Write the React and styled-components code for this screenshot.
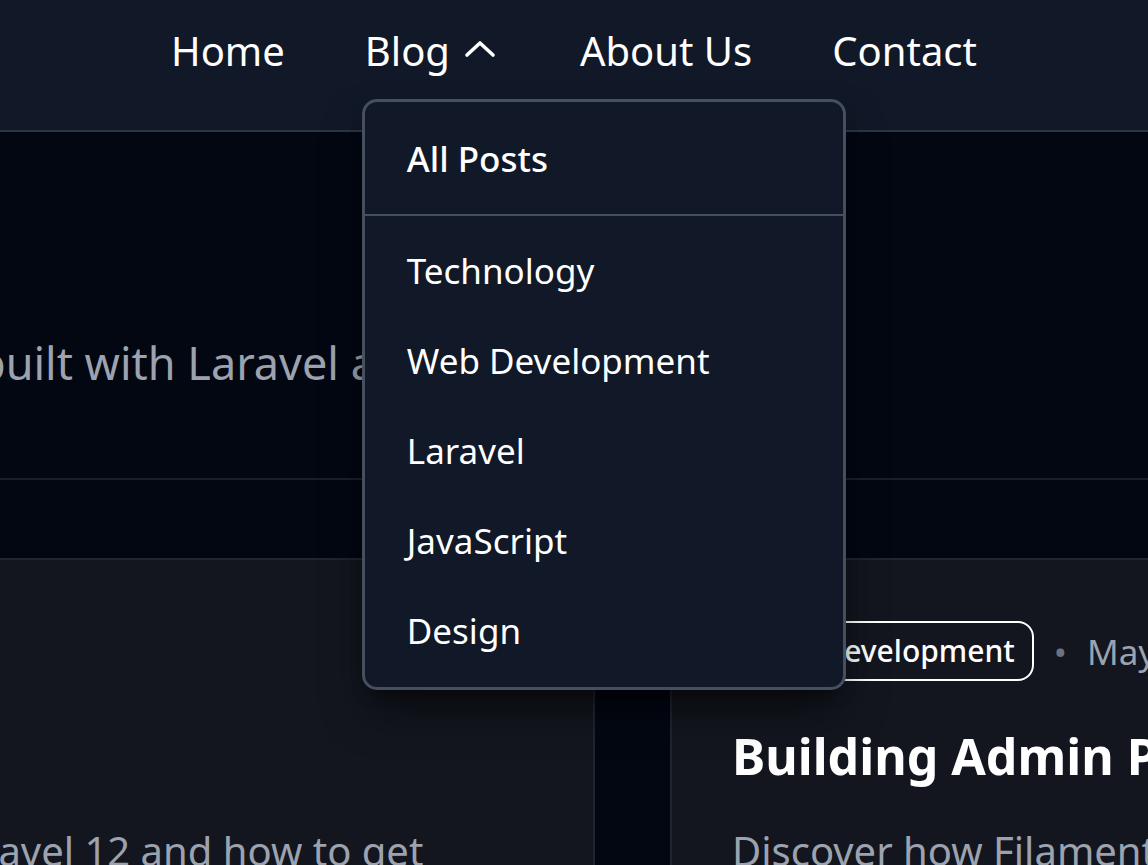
import React from "react";
import styled, { createGlobalStyle } from "styled-components";

const GlobalStyle = createGlobalStyle`
  * { box-sizing: border-box; }
  html, body {
    margin: 0;
    padding: 0;
    background: #030712;
  }
  body {
    font-family: "Noto Sans", "Open Sans", sans-serif;
    overflow: hidden;
  }
`;

const navLinks = ["Home", "Blog", "About Us", "Contact"];
const categories = ["Technology", "Web Development", "Laravel", "JavaScript", "Design"];

const posts = [
  {
    category: "Laravel",
    date: "Apr 15, 2025",
    title: "Laravel 12 Released",
    excerpt:
      "Explore the latest features in Laravel 12 and how to get started with the new release today.",
  },
  {
    category: "Web Development",
    date: "May 20, 2025",
    title: "Building Admin Panels with Filament",
    excerpt:
      "Discover how Filament makes building beautiful admin panels for Laravel fast and enjoyable.",
  },
];

function ChevronUp() {
  return (
    <Chevron viewBox="0 0 32 18" width="32" height="18">
      <polyline
        points="3,15 16,3 29,15"
        fill="none"
        stroke="#ffffff"
        strokeWidth="3.6"
        strokeLinecap="round"
        strokeLinejoin="round"
      />
    </Chevron>
  );
}

export default function App() {
  return (
    <Page>
      <GlobalStyle />
      <Header>
        <Nav>
          {navLinks.map((link) =>
            link === "Blog" ? (
              <NavItem key={link}>
                {link}
                <ChevronUp />
                <Dropdown>
                  <MenuItem $strong>All Posts</MenuItem>
                  <MenuGroup>
                    {categories.map((c) => (
                      <MenuItem key={c}>{c}</MenuItem>
                    ))}
                  </MenuGroup>
                </Dropdown>
              </NavItem>
            ) : (
              <NavItem key={link}>{link}</NavItem>
            )
          )}
        </Nav>
      </Header>

      <Main>
        <Hero>
          <Subtitle>Thoughts, tutorials and tips built with Laravel and Filament.</Subtitle>
        </Hero>

        <Cards>
          {posts.map((post) => (
            <Card key={post.title}>
              <Meta>
                <Badge>{post.category}</Badge>
                <Dot>•</Dot>
                <DateText>{post.date}</DateText>
              </Meta>
              <Title>{post.title}</Title>
              <Excerpt>{post.excerpt}</Excerpt>
            </Card>
          ))}
        </Cards>
      </Main>
    </Page>
  );
}

const Page = styled.div`
  min-height: 100vh;
  width: 100%;
  overflow: hidden;
  background: #030712;
`;

const Header = styled.header`
  position: relative;
  z-index: 10;
  height: 132px;
  background: #111827;
  border-bottom: 2px solid #2d3544;
`;

const Nav = styled.nav`
  display: flex;
  justify-content: center;
  gap: 80px;
  padding-top: 21px;
`;

const NavItem = styled.div`
  position: relative;
  display: flex;
  align-items: center;
  gap: 14px;
  font-size: 40px;
  line-height: 60px;
  color: #ffffff;
  white-space: nowrap;
`;

const Chevron = styled.svg`
  display: block;
  margin-top: -5px;
  margin-right: 4px;
`;

const Dropdown = styled.div`
  position: absolute;
  top: calc(100% + 18px);
  left: -3px;
  width: 484px;
  padding: 12px 0 11px;
  background: #111827;
  border: 3px solid #464f5e;
  border-radius: 15px;
  box-shadow: 0 25px 45px -8px rgba(0, 0, 0, 0.55), 0 10px 18px -10px rgba(0, 0, 0, 0.5);
`;

const MenuGroup = styled.div`
  margin-top: 10px;
  padding-top: 10px;
  border-top: 2px solid #464f5e;
`;

const MenuItem = styled.div`
  padding: 20px 40px 20px 42px;
  font-size: 35px;
  line-height: 50px;
  font-weight: ${(p) => (p.$strong ? 500 : 400)};
  color: #ffffff;
  white-space: nowrap;
`;

const Main = styled.main`
  width: 2607px;
  margin-left: -671px;
`;

const Hero = styled.section`
  padding: 196px 0 80px 55px;
  border-bottom: 2px solid #1a202b;
`;

const Subtitle = styled.p`
  margin: 0;
  font-size: 45px;
  line-height: 70px;
  color: #9ca3af;
  white-space: nowrap;
`;

const Cards = styled.section`
  display: grid;
  grid-template-columns: 1fr 1fr;
  gap: 75px;
  padding-top: 78px;
`;

const Card = styled.article`
  min-height: 400px;
  padding: 61px 60px;
  background: #13161f;
  border: 2px solid #1f2531;
  border-radius: 20px;
`;

const Meta = styled.div`
  display: flex;
  align-items: center;
  gap: 20px;
`;

const Badge = styled.span`
  padding: 8px 17px;
  font-size: 30px;
  line-height: 40px;
  font-weight: 500;
  color: #ffffff;
  border: 2px solid #ffffff;
  border-radius: 16px;
`;

const Dot = styled.span`
  font-size: 35px;
  color: #6b7280;
`;

const DateText = styled.span`
  font-size: 35px;
  color: #9ca3af;
`;

const Title = styled.h2`
  margin: 40px 0 0;
  font-size: 50px;
  line-height: 70px;
  font-weight: 700;
  color: #ffffff;
`;

const Excerpt = styled.p`
  margin: 27px 0 0;
  font-size: 40px;
  line-height: 65px;
  color: #9ca3af;
`;
